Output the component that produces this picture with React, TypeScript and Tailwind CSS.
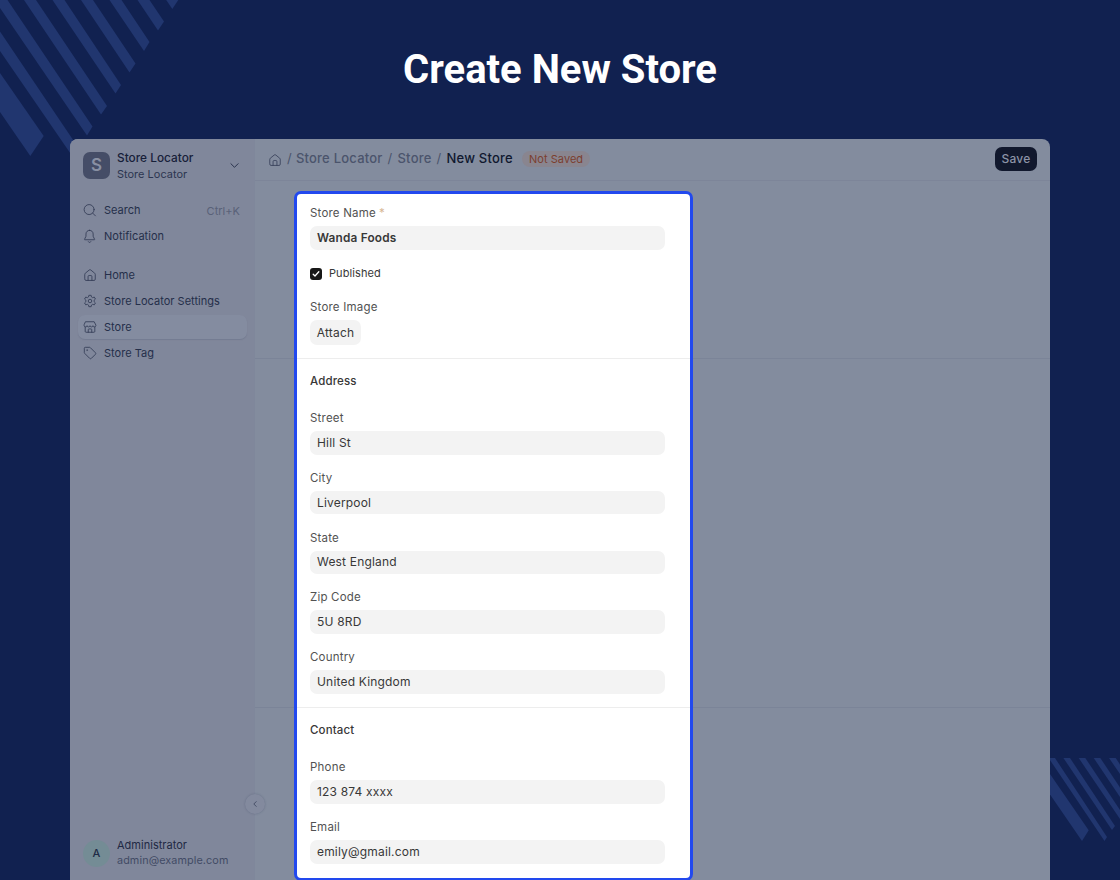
import React from "react";

type IconProps = { className?: string };

const HomeIcon = ({ className = "" }: IconProps) => (
  <svg viewBox="0 0 16 16" className={className} fill="none" stroke="currentColor" strokeLinejoin="round" strokeLinecap="round">
    <path d="M2 7.200a1.500 1.500 0 0 1 .6-1.200l4.500-3.700a1.400 1.400 0 0 1 1.800 0L13.400 6a1.500 1.500 0 0 1 .6 1.200v5.600a1.400 1.400 0 0 1-1.400 1.400H3.400A1.400 1.400 0 0 1 2 12.800z" />
    <path d="M5.800 14.200V9.800A1.200 1.200 0 0 1 7 8.600h2a1.200 1.200 0 0 1 1.200 1.200v4.400" />
  </svg>
);

const SearchIcon = ({ className = "" }: IconProps) => (
  <svg viewBox="0 0 16 16" className={className} fill="none" stroke="currentColor" strokeLinecap="round">
    <circle cx="7" cy="7.500" r="5.700" />
    <path d="m11.200 11.700 3 3" />
  </svg>
);

const BellIcon = ({ className = "" }: IconProps) => (
  <svg viewBox="0 0 16 16" className={className} fill="none" stroke="currentColor" strokeLinecap="round" strokeLinejoin="round">
    <path d="M7.500 1.500c-2.500 0-4.100 1.900-4.100 4.300v2.500L1.800 11.700a.4.4 0 0 0 .4.600h10.600a.4.4 0 0 0 .4-.6l-1.600-3.400V5.800C11.600 3.400 10 1.500 7.500 1.500z" />
    <path d="M6.100 14.500a1.600 1.600 0 0 0 2.800 0" />
  </svg>
);

const GearIcon = ({ className = "" }: IconProps) => (
  <svg viewBox="0 0 16 16" className={className} fill="none" stroke="currentColor" strokeLinejoin="round">
    <path d="M6.700 1.500h2.600l.4 1.900 1.300.8 1.900-.7 1.300 2.300-1.500 1.300v1.700l1.500 1.400-1.300 2.200-1.900-.6-1.300.8-.4 1.900H6.700l-.4-1.900-1.300-.8-1.900.6-1.300-2.200 1.500-1.400V7.100L1.800 5.800l1.300-2.300 1.900.7 1.300-.8z" />
    <circle cx="8" cy="8" r="2" />
  </svg>
);

const StoreIcon = ({ className = "" }: IconProps) => (
  <svg viewBox="0 0 16 16" className={className} fill="none" stroke="currentColor" strokeLinecap="round" strokeLinejoin="round">
    <path d="M3.200 2h9.600l1.900 3.800v.7a1.700 1.700 0 0 1-3.350 0 1.700 1.700 0 0 1-3.350 0 1.700 1.700 0 0 1-3.350 0 1.700 1.700 0 0 1-3.350 0v-.7z" />
    <path d="M2.500 8.200V13a1 1 0 0 0 1 1h9a1 1 0 0 0 1-1V8.200" />
    <path d="M6 14v-3a.8.8 0 0 1 .8-.8h2.400a.8.8 0 0 1 .8.800v3" />
  </svg>
);

const TagIcon = ({ className = "" }: IconProps) => (
  <svg viewBox="0 0 16 16" className={className} fill="none" stroke="currentColor" strokeLinejoin="round">
    <path d="M1.500 2.700A1.200 1.200 0 0 1 2.700 1.500h4.700a1.500 1.500 0 0 1 1 .4l5.700 5.700a1.400 1.400 0 0 1 0 2l-4.500 4.500a1.400 1.400 0 0 1-2 0L1.900 8.400a1.500 1.500 0 0 1-.4-1z" />
    <circle cx="4.700" cy="4.700" r=".4" fill="currentColor" />
  </svg>
);

const Chevron = ({ className = "" }: IconProps) => (
  <svg viewBox="0 0 10 10" className={className} fill="none" stroke="currentColor" strokeLinecap="round" strokeLinejoin="round">
    <path d="m1 3 4 4 4-4" />
  </svg>
);

function Backdrop() {
  return (
    <svg className="absolute inset-0 h-[880px] w-[1120px]" viewBox="0 0 1120 880" fill="#21366f">
      <path d="M0 73 43.700 136 30.300 156 0 112z" />
      <path d="M0 31.500 78.500 148 72.500 156.500 0 51z" />
      <path d="M0 0H7.500L92.500 126.500 87 135.500 0 8z" />
      <path d="M24 0H36L107 106 101 114.500z" />
      <path d="M52.500 0H64.500L121 85 115.500 93.500z" />
      <path d="M81 0H93L135.500 63.500 129.500 72.500z" />
      <path d="M109.500 0H121.500L149.500 42 144 51z" />
      <path d="M137.500 0H149.500L164 21.500 158 30.500z" />
      <path d="M166.200 0H178.300L172.300 9z" />
      <path d="M1050 774 1088.700 830.300 1082 841 1050 794.500z" />
      <path d="M1048.600 758H1055L1107 837 1104.500 841z" />
      <path d="M1063.400 758H1070L1115 826 1112 830z" />
      <path d="M1078.700 758H1085.300L1120 810V819z" />
      <path d="M1093.700 758H1100.300L1120 787.500V797z" />
      <path d="M1109 758H1115.700L1120 764.500V774z" />
    </svg>
  );
}

type NavProps = {
  icon: (p: IconProps) => React.JSX.Element;
  label: string;
  active?: boolean;
  hint?: string;
};

function NavItem({ icon: Icon, label, active, hint }: NavProps) {
  return (
    <a className={`flex h-6 items-center rounded-[7px] pr-[7px] pl-[5px] ${active ? "bg-[#848ca0] shadow-[0_1px_1px_rgba(60,70,100,0.18)]" : ""}`}>
      <Icon className="size-[14px] text-[#353e57]" />
      <span className="ml-[7px] flex-1 text-[11px] font-[430] tracking-[0.02px] text-[#252f4a]">{label}</span>
      {hint && <span className="pt-[3px] text-[11px] tracking-[0.02px] text-[#596178]">{hint}</span>}
    </a>
  );
}

function Sidebar() {
  return (
    <aside className="relative flex w-[185px] shrink-0 flex-col border-r border-[#7f879b] bg-[#80879b] pr-[7px] pl-2">
      <div className="flex h-[53px] items-center pr-2 pl-[5px]">
        <div className="flex size-[27px] items-center justify-center rounded-[7px] bg-[#454d67] text-[17px] font-semibold text-[#8990a3]">S</div>
        <div className="ml-[7px] flex-1 leading-4">
          <div className="text-[11.800px] font-medium tracking-[0.03px] text-[#172039]">Store Locator</div>
          <div className="pt-px text-[10.900px] leading-[15px] tracking-[0.05px] text-[#2c3550]">Store Locator</div>
        </div>
        <Chevron className="size-[9px] text-[#202a45]" />
      </div>
      <nav className="mt-[6px] flex flex-col gap-[2px]">
        <NavItem icon={SearchIcon} label="Search" hint="Ctrl+K" />
        <NavItem icon={BellIcon} label="Notification" />
      </nav>
      <nav className="mt-[15px] flex flex-col gap-[2px]">
        <NavItem icon={HomeIcon} label="Home" />
        <NavItem icon={GearIcon} label="Store Locator Settings" />
        <NavItem icon={StoreIcon} label="Store" active />
        <NavItem icon={TagIcon} label="Store Tag" />
      </nav>
      <div className="mt-auto mb-[11px] flex items-center pl-[5px]">
        <div className="flex size-[27px] items-center justify-center rounded-full bg-[#748c95] text-[11px] font-medium text-[#202b46]">A</div>
        <div className="ml-[7px] leading-4">
          <div className="text-[11px] font-[430] tracking-[0.02px] text-[#202944]">Administrator</div>
          <div className="text-[10.800px] tracking-[0.1px] text-[#424b65]">admin@example.com</div>
        </div>
      </div>
      <button className="absolute right-[-11px] bottom-[66px] z-10 flex size-5 items-center justify-center rounded-full bg-[#838a9e] shadow-[0_0_2px_rgba(50,60,90,0.35)]">
        <Chevron className="size-[6px] rotate-90 text-[#202a45]" />
      </button>
    </aside>
  );
}

function Header() {
  return (
    <header className="flex h-[42px] shrink-0 items-center border-b border-[#7d8599] pr-[13px] pb-px pl-[13px] text-[13px] font-medium tracking-[0.22px] text-[#4b546c]">
      <HomeIcon className="mt-px size-[14px] text-[#39425b]" />
      <span className="ml-[5px] font-normal">/</span>
      <span className="ml-[4px]">Store Locator</span>
      <span className="ml-[5px] font-normal">/</span>
      <span className="ml-[5px]">Store</span>
      <span className="ml-[5px] font-normal">/</span>
      <span className="ml-[5px] text-[#10182f]">New Store</span>
      <span className="ml-[9px] flex h-4 items-center rounded-full bg-[#89858f] px-[7px] text-[11px] font-[430] tracking-[0.05px] text-[#7c3f2f]">Not Saved</span>
      <button className="ml-auto flex h-6 w-[42px] items-center justify-center rounded-[7px] bg-[#11182d] text-[12px] text-[#8c93a6]">Save</button>
    </header>
  );
}

const Label = ({ children }: { children: React.ReactNode }) => (
  <div className="h-4 pt-px text-[11.500px] leading-4 tracking-[0.2px] text-[#525252]">{children}</div>
);

function Field({ label, value, required }: { label: string; value: string; required?: boolean }) {
  return (
    <div className="flex flex-col gap-[6px]">
      <Label>
        {label}
        {required && <span className="ml-[3px] text-[#d8b795]">*</span>}
      </Label>
      <div className={`flex h-[23.500px] items-center rounded-[7px] bg-[#f3f3f3] px-[7px] text-[#383838] ${required ? "pt-[2px] text-[11.800px] font-semibold tracking-[0.2px]" : "text-[12px] tracking-[0.18px]"}`}>
        {value}
      </div>
    </div>
  );
}

function Gutter({ className = "" }: { className?: string }) {
  return (
    <div className={`flex flex-col ${className}`}>
      <div className="h-[178px] border-b border-[#7b8498]" />
      <div className="h-[349px] border-b border-[#7b8498]" />
    </div>
  );
}

function StoreForm() {
  return (
    <form className="mt-[10px] flex h-[690px] w-[399px] shrink-0 flex-col rounded-[7px] border-[3px] border-[#2249ee] bg-white">
      <section className="h-[165px] border-b border-[#ededed] pt-[10px] pr-[25px] pl-[13px]">
        <Field label="Store Name" value="Wanda Foods" required />
        <div className="mt-[16px] flex h-4 items-center gap-[7px] text-[11px] font-[430] tracking-[0.08px] text-[#383838]">
          <span className="flex size-[12px] items-center justify-center rounded-[3px] bg-[#171717]">
            <svg viewBox="0 0 8 8" className="size-[8px]" fill="none" stroke="white" strokeWidth="1.3" strokeLinecap="round" strokeLinejoin="round">
              <path d="M1.200 4.200 3 6l3.800-4.200" />
            </svg>
          </span>
          Published
        </div>
        <div className="mt-[16.500px]">
          <Label>Store Image</Label>
        </div>
        <button className="mt-[6px] flex h-[25px] w-[51px] items-center justify-center rounded-[7px] bg-[#f3f3f3] text-[12px] tracking-[0.2px] text-[#383838]">Attach</button>
      </section>
      <section className="h-[349px] border-b border-[#ededed] pt-[14px] pr-[25px] pl-[13px]">
        <h2 className="h-4 text-[11.500px] leading-4 font-[550] tracking-[0.15px] text-[#383838]">Address</h2>
        <div className="mt-5 flex flex-col gap-[14.300px]">
          <Field label="Street" value="Hill St" />
          <Field label="City" value="Liverpool" />
          <Field label="State" value="West England" />
          <Field label="Zip Code" value="5U 8RD" />
          <Field label="Country" value="United Kingdom" />
        </div>
      </section>
      <section className="pt-[14px] pr-[25px] pl-[13px]">
        <h2 className="h-4 text-[11.500px] leading-4 font-[550] tracking-[0.15px] text-[#383838]">Contact</h2>
        <div className="mt-5 flex flex-col gap-[14.500px]">
          <Field label="Phone" value="123 874 xxxx" />
          <Field label="Email" value="emily@gmail.com" />
        </div>
      </section>
    </form>
  );
}

export default function App() {
  return (
    <div className="relative h-[880px] w-[1120px] overflow-hidden bg-[#112150] font-['Inter',sans-serif]">
      <Backdrop />
      <div className="relative flex h-full flex-col">
        <h1 className="flex h-[139px] shrink-0 items-center justify-center font-['Roboto',sans-serif] text-[40px] font-bold text-white">Create New Store</h1>
        <div className="mx-[70px] flex min-h-0 flex-1 overflow-hidden rounded-t-[8px] bg-[#838c9e]">
          <Sidebar />
          <main className="flex min-w-0 flex-1 flex-col">
            <Header />
            <div className="flex flex-1">
              <Gutter className="w-[39px]" />
              <StoreForm />
              <Gutter className="flex-1" />
            </div>
          </main>
        </div>
      </div>
    </div>
  );
}
